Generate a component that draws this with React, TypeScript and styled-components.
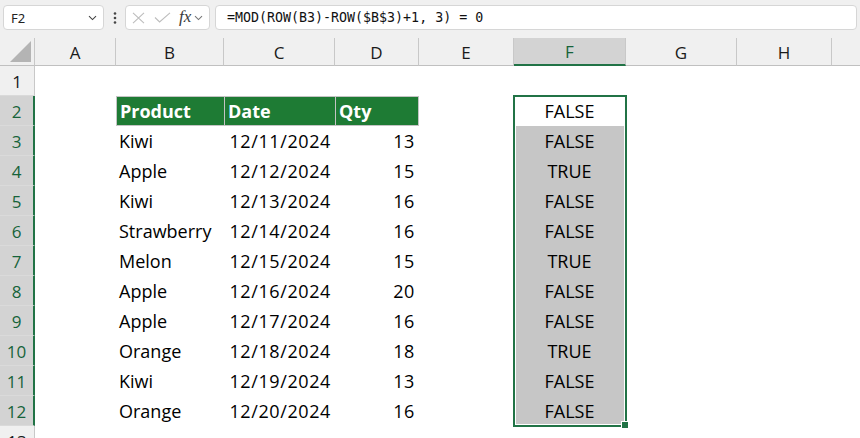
import React from 'react';
import styled, { createGlobalStyle, css } from 'styled-components';

const GREEN = '#217346';
const HEADER_GREEN = '#1e7b34';

const Global = createGlobalStyle`
  html, body { margin: 0; padding: 0; background: #ffffff; overflow: hidden; }
  #root { width: 860px; height: 438px; }
`;

const Page = styled.div`
  width: 860px;
  height: 438px;
  display: flex;
  flex-direction: column;
  background: #ffffff;
  overflow: hidden;
  font-family: "Open Sans", "Liberation Sans", sans-serif;
`;

const FormulaBar = styled.div`
  height: 38px;
  flex: none;
  box-sizing: border-box;
  background: #f0f0f0;
  display: flex;
  align-items: flex-start;
  padding: 5px 0 0 3px;
`;

const Box = styled.div`
  height: 25px;
  box-sizing: border-box;
  background: #ffffff;
  border: 1px solid #d6d6d6;
  border-radius: 4px;
  display: flex;
  align-items: center;
`;

const NameBox = styled(Box)`
  width: 101px;
  padding: 0 6px 0 7px;
  justify-content: space-between;
  font-family: "Noto Sans", "Liberation Sans", sans-serif;
  font-size: 13px;
  color: #222;
`;

const Dots = styled.div`
  width: 21px;
  height: 25px;
  display: flex;
  align-items: center;
  justify-content: center;
`;

const FuncBox = styled(Box)`
  width: 85px;
  padding: 0 0 0 6px;
`;

const FxText = styled.span`
  font-family: "Liberation Serif", "DejaVu Serif", serif;
  font-style: italic;
  font-size: 17px;
  color: #3a3a3a;
  margin-left: 8px;
  line-height: 1;
  margin-top: -2px;
`;

const ChevWrap = styled.span`
  margin-left: 3px;
  display: flex;
`;

const FormulaInput = styled(Box)`
  flex: 1;
  margin-left: 5px;
  margin-right: 3px;
  padding-left: 11px;
  font-family: "DejaVu Sans Mono", "Liberation Mono", monospace;
  font-size: 13.3px;
  color: #111;
  white-space: pre;
`;

const SheetWrap = styled.div`
  position: relative;
  flex: 1;
`;

const Sheet = styled.div`
  display: grid;
  grid-template-columns: 35px 81px 108px 111px 84px 95px 112px 111px 95px 40px;
  grid-template-rows: 28px repeat(13, 30px);
`;

const Corner = styled.div`
  background: #f0f0f0;
  box-sizing: border-box;
  border-right: 1px solid #c8c8c8;
  border-bottom: 1px solid #c0c0c0;
  display: flex;
  align-items: flex-end;
  justify-content: flex-end;
  padding: 0 3px 3px 0;
`;

const Triangle = styled.div`
  width: 21px;
  height: 21px;
  background: #b4b4b4;
  clip-path: polygon(100% 0, 100% 100%, 0 100%);
`;

const ColHeader = styled.div<{ $sel?: boolean }>`
  box-sizing: border-box;
  background: ${(p) => (p.$sel ? '#d3d3d3' : '#f0f0f0')};
  border-right: 1px solid #c8c8c8;
  border-bottom: ${(p) => (p.$sel ? `2px solid ${GREEN}` : '1px solid #c0c0c0')};
  color: ${(p) => (p.$sel ? '#16633a' : '#1a1a1a')};
  font-size: 17px;
  display: flex;
  align-items: center;
  justify-content: center;
  padding-top: 1px;
`;

const RowHeader = styled.div<{ $sel?: boolean }>`
  box-sizing: border-box;
  background: ${(p) => (p.$sel ? '#d3d3d3' : '#f0f0f0')};
  border-right: ${(p) => (p.$sel ? `2px solid ${GREEN}` : '1px solid #c8c8c8')};
  border-bottom: 1px solid #dadada;
  color: ${(p) => (p.$sel ? '#16633a' : '#1a1a1a')};
  font-size: 17px;
  display: flex;
  align-items: center;
  justify-content: center;
  padding-top: 1px;
`;

const Cell = styled.div<{ $align?: 'left' | 'right' | 'center'; $fill?: string; $num?: boolean }>`
  box-sizing: border-box;
  padding: 1px 4px 0 3px;
  font-size: 18px;
  color: #000;
  line-height: 29px;
  white-space: nowrap;
  overflow: visible;
  text-align: ${(p) => p.$align || 'left'};
  background: ${(p) => p.$fill || '#ffffff'};
  letter-spacing: ${(p) => (p.$num ? '0.6px' : '0')};
`;

const HeadCell = styled.div<{ $last?: boolean }>`
  box-sizing: border-box;
  background: ${HEADER_GREEN};
  color: #ffffff;
  font-weight: 700;
  font-size: 18px;
  line-height: 28px;
  padding: 0 3px;
  border-top: 1px solid #c4c4c4;
  border-bottom: 1px solid #c4c4c4;
  border-left: 1px solid #c4c4c4;
  ${(p) =>
    p.$last &&
    css`
      border-right: 1px solid #c4c4c4;
    `}
`;

const Selection = styled.div`
  position: absolute;
  left: 513px;
  top: 57px;
  width: 114px;
  height: 332px;
  box-sizing: border-box;
  border: 2px solid ${GREEN};
  box-shadow: inset 0 0 0 1px #ffffff;
  pointer-events: none;
`;

const FillHandle = styled.div`
  position: absolute;
  left: 621px;
  top: 383px;
  width: 8px;
  height: 8px;
  box-sizing: border-box;
  background: ${GREEN};
  border: 1px solid #ffffff;
`;

const Chevron = ({ color = '#555' }: { color?: string }) => (
  <svg width="9" height="6" viewBox="0 0 9 6">
    <path d="M1 1.2 L4.5 4.6 L8 1.2" fill="none" stroke={color} strokeWidth="1.1" />
  </svg>
);

const cols = ['A', 'B', 'C', 'D', 'E', 'F', 'G', 'H', ''];

const data: [string, string, number, string][] = [
  ['Kiwi', '12/11/2024', 13, 'FALSE'],
  ['Apple', '12/12/2024', 15, 'TRUE'],
  ['Kiwi', '12/13/2024', 16, 'FALSE'],
  ['Strawberry', '12/14/2024', 16, 'FALSE'],
  ['Melon', '12/15/2024', 15, 'TRUE'],
  ['Apple', '12/16/2024', 20, 'FALSE'],
  ['Apple', '12/17/2024', 16, 'FALSE'],
  ['Orange', '12/18/2024', 18, 'TRUE'],
  ['Kiwi', '12/19/2024', 13, 'FALSE'],
  ['Orange', '12/20/2024', 16, 'FALSE'],
];

const Empty = () => <Cell />;

export default function App() {
  const rows: React.ReactNode[] = [];

  rows.push(<RowHeader key="r1">1</RowHeader>);
  for (let i = 0; i < 9; i++) rows.push(<Empty key={`r1c${i}`} />);

  rows.push(
    <RowHeader key="r2" $sel>
      2
    </RowHeader>
  );
  rows.push(<Empty key="r2a" />);
  rows.push(<HeadCell key="r2b">Product</HeadCell>);
  rows.push(<HeadCell key="r2c">Date</HeadCell>);
  rows.push(
    <HeadCell key="r2d" $last>
      Qty
    </HeadCell>
  );
  rows.push(<Empty key="r2e" />);
  rows.push(
    <Cell key="r2f" $align="center">
      FALSE
    </Cell>
  );
  rows.push(<Empty key="r2g" />);
  rows.push(<Empty key="r2h" />);
  rows.push(<Empty key="r2i" />);

  data.forEach(([prod, date, qty, flag], idx) => {
    const n = idx + 3;
    rows.push(
      <RowHeader key={`r${n}`} $sel>
        {n}
      </RowHeader>
    );
    rows.push(<Empty key={`r${n}a`} />);
    rows.push(<Cell key={`r${n}b`}>{prod}</Cell>);
    rows.push(
      <Cell key={`r${n}c`} $align="right" $num>
        {date}
      </Cell>
    );
    rows.push(
      <Cell key={`r${n}d`} $align="right" $num>
        {qty}
      </Cell>
    );
    rows.push(<Empty key={`r${n}e`} />);
    rows.push(
      <Cell key={`r${n}f`} $align="center" $fill="#c6c6c6">
        {flag}
      </Cell>
    );
    rows.push(<Empty key={`r${n}g`} />);
    rows.push(<Empty key={`r${n}h`} />);
    rows.push(<Empty key={`r${n}i`} />);
  });

  rows.push(<RowHeader key="r13">13</RowHeader>);
  for (let i = 0; i < 9; i++) rows.push(<Empty key={`r13c${i}`} />);

  return (
    <Page>
      <Global />
      <FormulaBar>
        <NameBox>
          <span>F2</span>
          <Chevron color="#444" />
        </NameBox>
        <Dots>
          <svg width="4" height="14" viewBox="0 0 4 14">
            <circle cx="2" cy="2.5" r="1.3" fill="#444" />
            <circle cx="2" cy="7" r="1.3" fill="#444" />
            <circle cx="2" cy="11.5" r="1.3" fill="#444" />
          </svg>
        </Dots>
        <FuncBox>
          <svg width="13" height="12" viewBox="0 0 13 12">
            <path d="M1 0.8 L12 11.2 M12 0.8 L1 11.2" stroke="#bdbdbd" strokeWidth="1.1" fill="none" />
          </svg>
          <svg width="17" height="11" viewBox="0 0 17 11" style={{ marginLeft: 9 }}>
            <path d="M1 5.5 L5.6 10 L16 0.8" stroke="#bdbdbd" strokeWidth="1.1" fill="none" />
          </svg>
          <FxText>fx</FxText>
          <ChevWrap>
            <Chevron color="#777" />
          </ChevWrap>
        </FuncBox>
        <FormulaInput>=MOD(ROW(B3)-ROW($B$3)+1, 3) = 0</FormulaInput>
      </FormulaBar>
      <SheetWrap>
        <Sheet>
          <Corner>
            <Triangle />
          </Corner>
          {cols.map((c) => (
            <ColHeader key={`h${c}`} $sel={c === 'F'}>
              {c}
            </ColHeader>
          ))}
          {rows}
        </Sheet>
        <Selection />
        <FillHandle />
      </SheetWrap>
    </Page>
  );
}
